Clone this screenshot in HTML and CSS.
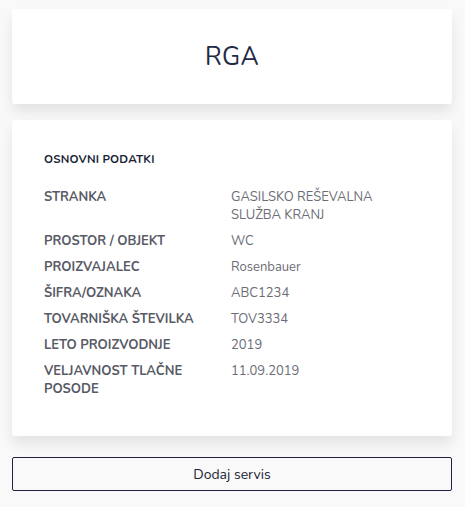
FILE: index.html
```html
<!DOCTYPE html>
<html lang="sl">
<head>
<meta charset="utf-8">
<link rel="stylesheet" href="styles.css">
</head>
<body>
<div class="page">
  <div class="card title-card">
    <h1 class="title">RGA</h1>
  </div>
  <div class="card info-card">
    <h2 class="section">OSNOVNI PODATKI</h2>
    <div class="rows">
      <div class="row"><div class="label">STRANKA</div><div class="value">GASILSKO REŠEVALNA SLUŽBA KRANJ</div></div>
      <div class="row"><div class="label">PROSTOR / OBJEKT</div><div class="value">WC</div></div>
      <div class="row"><div class="label">PROIZVAJALEC</div><div class="value small">Rosenbauer</div></div>
      <div class="row"><div class="label">ŠIFRA/OZNAKA</div><div class="value">ABC1234</div></div>
      <div class="row"><div class="label">TOVARNIŠKA ŠTEVILKA</div><div class="value">TOV3334</div></div>
      <div class="row"><div class="label">LETO PROIZVODNJE</div><div class="value">2019</div></div>
      <div class="row"><div class="label">VELJAVNOST TLAČNE POSODE</div><div class="value">11.09.2019</div></div>
    </div>
  </div>
  <button class="btn">Dodaj servis</button>
</div>
</body>
</html>
```

FILE: styles.css
```css
html, body {
  margin: 0;
  padding: 0;
  background: #f9f9fa;
  font-family: "Nunito", "Lato", "Open Sans", sans-serif;
}
.page {
  padding: 9px 13px 0 12px;
  display: flex;
  flex-direction: column;
}
.card {
  background: #fff;
  border-radius: 3px;
  box-shadow: 0 8px 14px rgba(0, 0, 0, 0.09);
}
.title-card {
  height: 95px;
  display: flex;
  align-items: center;
  justify-content: center;
}
.title {
  margin: 0;
  font-weight: 400;
  font-size: 25px;
  color: #1f2a44;
  letter-spacing: 0.3px;
}
.info-card {
  margin-top: 16px;
  padding: 32px 32px 38px 32px;
  height: 316px;
  box-sizing: border-box;
}
.section {
  margin: 0 0 22px 0;
  font-size: 11.5px;
  font-weight: 700;
  color: #1a1f36;
  letter-spacing: 0.2px;
  line-height: 14px;
}
.rows {
  display: flex;
  flex-direction: column;
  gap: 8px;
}
.row {
  display: grid;
  grid-template-columns: 187px 175px;
  font-size: 13px;
  line-height: 18px;
}
.label {
  font-weight: 700;
  color: #585a66;
}
.value {
  color: #6b6c76;
}
.btn {
  margin-top: 21px;
  height: 34px;
  border: 1px solid #1f2340;
  border-radius: 2px;
  background: transparent;
  font-family: "Nunito", "Lato", "Open Sans", sans-serif;
  font-size: 14px;
  color: #222433;
  cursor: pointer;
}
```
